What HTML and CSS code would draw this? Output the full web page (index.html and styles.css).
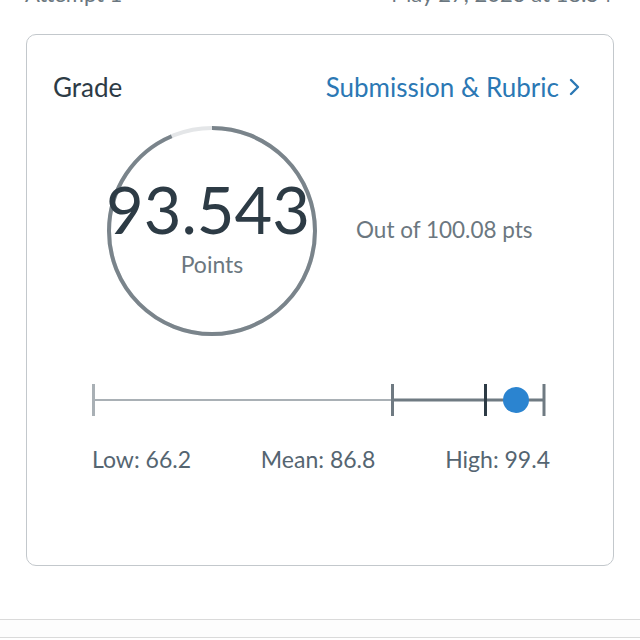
FILE: index.html
```html
<!DOCTYPE html>
<html lang="en">
<head>
<meta charset="utf-8">
<title>Grade</title>
<link rel="stylesheet" href="styles.css">
</head>
<body>
<div class="top-meta">
  <span>Attempt 1</span>
  <span>May 27, 2023 at 18:54</span>
</div>
<section class="card">
  <div class="card-head">
    <h2 class="title">Grade</h2>
    <a class="link" href="#">Submission &amp; Rubric
      <svg class="chev" width="12" height="18" viewBox="0 0 12 18"><path d="M2 2 L9 9 L2 16" fill="none" stroke="#2b78b4" stroke-width="2.4" stroke-linecap="round" stroke-linejoin="round"/></svg>
    </a>
  </div>
  <div class="score-row">
    <div class="ring">
      <svg class="ring-svg" width="212" height="212" viewBox="0 0 212 212">
        <circle cx="106" cy="106" r="103" fill="none" stroke="#e4e6e8" stroke-width="4"/>
        <circle cx="106" cy="106" r="103" fill="none" stroke="#7a848b" stroke-width="4" stroke-dasharray="604.9 647.2" transform="rotate(-90 106 106)"/>
      </svg>
      <div class="ring-text">
        <div class="score">93.543</div>
        <div class="points">Points</div>
      </div>
    </div>
    <div class="outof">Out of 100.08 pts</div>
  </div>
  <div class="range">
    <svg class="range-svg" width="460" height="34" viewBox="0 0 460 34">
      <line x1="1" y1="17" x2="300" y2="17" stroke="#a9b0b5" stroke-width="2"/>
      <line x1="300" y1="17" x2="452" y2="17" stroke="#6f7a82" stroke-width="3"/>
      <line x1="1.5" y1="1" x2="1.5" y2="33" stroke="#a9b0b5" stroke-width="3"/>
      <line x1="300.5" y1="1" x2="300.5" y2="33" stroke="#6f7a82" stroke-width="3"/>
      <line x1="393.5" y1="1" x2="393.5" y2="33" stroke="#2d3b45" stroke-width="3"/>
      <line x1="452" y1="1" x2="452" y2="33" stroke="#6f7a82" stroke-width="3"/>
      <circle cx="424" cy="17" r="13" fill="#2b84d0"/>
    </svg>
    <div class="range-labels">
      <span>Low: 66.2</span>
      <span>Mean: 86.8</span>
      <span>High: 99.4</span>
    </div>
  </div>
</section>
<div class="footer-strip"></div>
</body>
</html>
```

FILE: styles.css
```css
* { box-sizing: border-box; }
html, body { margin: 0; padding: 0; background: #ffffff; }
body {
  font-family: Lato, "Noto Sans", sans-serif;
  color: #2d3b45;
  width: 640px;
  height: 640px;
  overflow: hidden;
}
.top-meta {
  display: flex;
  justify-content: space-between;
  padding: 0 28px 0 25px;
  margin-top: -17px;
  font-size: 22px;
  line-height: 22px;
  color: #6b7780;
}
.card {
  margin: 29px 0 0 26px;
  width: 588px;
  height: 532px;
  border: 1px solid #c3c8cc;
  border-radius: 10px;
  padding: 36px 32px 0 26px;
}
.card-head {
  display: flex;
  justify-content: space-between;
  align-items: center;
  height: 32px;
}
.title {
  margin: 0;
  font-size: 26px;
  font-weight: 400;
  color: #2d3b45;
}
.link {
  display: flex;
  align-items: center;
  gap: 10px;
  font-size: 26px;
  color: #2b78b4;
  text-decoration: none;
}
.chev { display: block; }
.score-row {
  display: flex;
  align-items: center;
  margin-top: 22px;
  padding-left: 53px;
  gap: 38px;
}
.ring {
  display: grid;
  width: 212px;
  height: 212px;
}
.ring-svg, .ring-text { grid-area: 1 / 1; }
.ring-svg { display: block; }
.ring-text {
  display: flex;
  flex-direction: column;
  align-items: center;
  padding-top: 52px;
}
.score {
  font-size: 65px;
  line-height: 64px;
  color: #2d3b45;
  margin-left: -8px;
}
.points {
  margin-top: 10px;
  font-size: 23px;
  line-height: 26px;
  color: #6b7780;
}
.outof {
  font-size: 22.5px;
  color: #6b7780;
  margin-top: -4px;
}
.range {
  margin-top: 46px;
  padding-left: 39px;
}
.range-svg { display: block; }
.range-labels {
  display: flex;
  justify-content: space-between;
  width: 458px;
  margin-top: 29px;
  font-size: 23px;
  line-height: 26px;
  color: #556571;
}
.footer-strip {
  margin-top: 53px;
  height: 19px;
  border-top: 1px solid #dadada;
  border-bottom: 1px solid #dadada;
  background: #fdfdfd;
}
```
